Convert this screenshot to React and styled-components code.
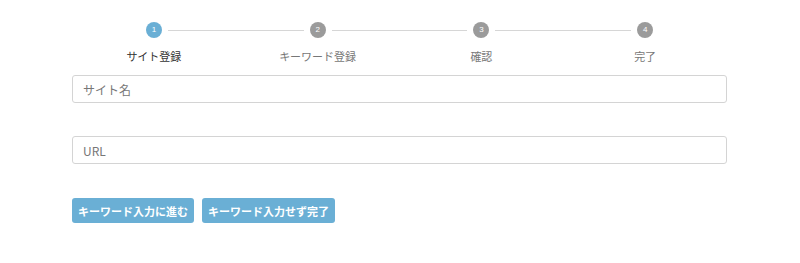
import styled, { createGlobalStyle } from "styled-components";

const GlobalStyle = createGlobalStyle`
  body {
    margin: 0;
    background: #fff;
    font-family: "Noto Sans CJK JP", "Liberation Sans", sans-serif;
  }
`;

const Page = styled.div`
  width: 655px;
  margin: 0 0 0 72px;
  padding-top: 22px;
`;

const Steps = styled.ol`
  display: flex;
  list-style: none;
  margin: 0;
  padding: 0;
`;

const Step = styled.li`
  position: relative;
  flex: 1;
  display: flex;
  flex-direction: column;
  align-items: center;

  &:not(:last-child)::after {
    content: "";
    position: absolute;
    top: 8px;
    left: calc(50% + 14px);
    right: calc(-50% + 14px);
    height: 1px;
    background: #d6d6d6;
  }
`;

const Circle = styled.span`
  width: 16px;
  height: 16px;
  border-radius: 50%;
  background: ${(p) => (p.$active ? "#6aafd5" : "#9b9b9b")};
  color: #fff;
  font-family: "Liberation Sans", sans-serif;
  font-size: 8px;
  line-height: 16px;
  text-align: center;
`;

const StepLabel = styled.span`
  margin-top: 11px;
  font-size: 11px;
  line-height: 14px;
  color: ${(p) => (p.$active ? "#333" : "#777")};
`;

const Form = styled.form`
  margin-top: 12px;
  display: flex;
  flex-direction: column;
  gap: 33px;
`;

const Input = styled.input`
  box-sizing: border-box;
  width: 100%;
  height: 28px;
  padding: 0 10px;
  border: 1px solid #d4d4d4;
  border-radius: 3px;
  font-family: "Noto Sans CJK JP", "Liberation Sans", sans-serif;
  font-size: 12px;
  color: #333;

  &::placeholder {
    color: #777;
  }
`;

const Buttons = styled.div`
  display: flex;
  gap: 8px;
  margin-top: 34px;
`;

const Button = styled.button`
  height: 25px;
  padding: 0 6px;
  border: none;
  border-radius: 3px;
  background: #6aafd5;
  color: #fff;
  font-family: "Noto Sans CJK JP", "Liberation Sans", sans-serif;
  font-size: 11px;
  font-weight: 700;
  cursor: pointer;
`;

const steps = ["サイト登録", "キーワード登録", "確認", "完了"];

export default function App() {
  return (
    <>
      <GlobalStyle />
      <Page>
        <Steps>
          {steps.map((label, i) => (
            <Step key={label}>
              <Circle $active={i === 0}>{i + 1}</Circle>
              <StepLabel $active={i === 0}>{label}</StepLabel>
            </Step>
          ))}
        </Steps>
        <Form onSubmit={(e) => e.preventDefault()}>
          <Input placeholder="サイト名" />
          <Input placeholder="URL" />
        </Form>
        <Buttons>
          <Button>キーワード入力に進む</Button>
          <Button>キーワード入力せず完了</Button>
        </Buttons>
      </Page>
    </>
  );
}
